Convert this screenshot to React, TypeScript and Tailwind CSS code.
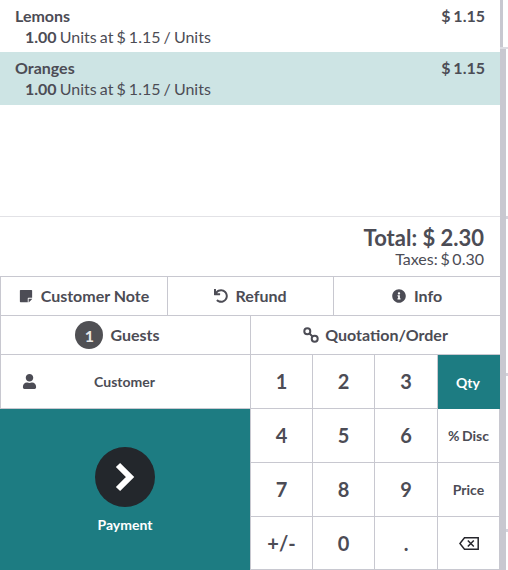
import type { ReactNode } from "react";
import { FaInfoCircle, FaStickyNote, FaUndo, FaUser } from "react-icons/fa";

const Line = ({ name, sel, h }: { name: string; sel?: boolean; h: string }) => (
  <div className={`${h} px-[15px] pt-[5px] shrink-0 ${sel ? "bg-[#cde4e4]" : ""}`}>
    <div className="flex justify-between font-bold text-[16px] leading-[22px] [word-spacing:-1px]">
      <span>{name}</span>
      <span>$ 1.15</span>
    </div>
    <div className="pl-[10px] text-[16px] leading-[20px] [word-spacing:-1px]">
      <b>1.00</b> Units at $ 1.15 / Units
    </div>
  </div>
);

const Key = ({ children, small, active }: { children: ReactNode; small?: boolean; active?: boolean }) => (
  <div
    className={`flex items-center justify-center font-bold ${small ? "text-[14px] [word-spacing:-1px]" : "text-[20px] pb-[1px]"} ${
      active ? "bg-[#1d7c82] text-white pr-[2px]" : "border-r border-b border-[#c8c8d0]"
    }`}
  >
    {children}
  </div>
);

const Backspace = () => (
  <svg width="20" height="13" viewBox="0 0 20 13" fill="none" stroke="#26262c" strokeWidth="1.5">
    <path d="M5.5 0.8H19.2V12.2H5.5L0.9 6.5Z" />
    <path d="M8.8 3.4L14.8 9.6M14.8 3.4L8.8 9.6" />
  </svg>
);

const Chain = () => (
  <svg width="16" height="16" viewBox="0 0 16 16" fill="none" stroke="currentColor" strokeWidth="2">
    <circle cx="4.3" cy="4.3" r="3" />
    <circle cx="11.7" cy="11.7" r="3" />
    <path d="M6.5 6.5L9.5 9.5" />
  </svg>
);

const Chevron = () => (
  <svg width="20" height="30" viewBox="0 0 20 30" fill="none" stroke="#ffffff" strokeWidth="6">
    <path d="M3 3L15 15L3 27" />
  </svg>
);

export default function App() {
  return (
    <div className="w-[508px] h-[570px] overflow-hidden flex bg-white text-[#4c4c55] font-['Lato',sans-serif]">
      <div className="w-[500px] h-full flex flex-col shrink-0">
        <div className="h-[217px] shrink-0 border-b border-[#e2e2e6] flex flex-col">
          <Line name="Lemons" h="h-[52px]" />
          <Line name="Oranges" h="h-[53px]" sel />
        </div>
        <div className="h-[59px] shrink-0 text-right pr-[16px] pt-[7px]">
          <div className="text-[22px] font-bold leading-[27px]">Total: $ 2.30</div>
          <div className="text-[16px] leading-[15px] [word-spacing:-1.4px]">Taxes: $ 0.30</div>
        </div>
        <div className="h-[40px] shrink-0 grid grid-cols-[167px_166px_1fr] border-t border-b border-l border-[#c8c8d0] text-[16px] font-bold">
          <div className="flex items-center justify-center gap-[8px] border-r border-[#c8c8d0]">
            <FaStickyNote size={14} />
            Customer Note
          </div>
          <div className="flex items-center justify-center gap-[7px] border-r border-[#c8c8d0]">
            <FaUndo size={14} />
            Refund
          </div>
          <div className="flex items-center justify-center gap-[8px]">
            <FaInfoCircle size={14} />
            Info
          </div>
        </div>
        <div className="h-[39px] shrink-0 grid grid-cols-[250px_1fr] border-b border-l border-[#c8c8d0] text-[16px] font-bold">
          <div className="flex items-center justify-center gap-[7px] border-r border-[#c8c8d0] pr-[16px]">
            <span className="w-[28px] h-[28px] rounded-full bg-[#505054] text-[#e8e8e8] flex items-center justify-center pt-[2px]">1</span>
            Guests
          </div>
          <div className="flex items-center justify-center gap-[6px]">
            <Chain />
            Quotation/Order
          </div>
        </div>
        <div className="flex-1 grid grid-cols-[251px_1fr] min-h-0">
          <div className="flex flex-col">
            <div className="h-[54px] shrink-0 flex items-center border-l border-r border-b border-[#c8c8d0] pl-[21px] pr-[38px] text-[14px] font-bold">
              <FaUser size={15} />
              <span className="flex-1 text-center">Customer</span>
            </div>
            <div className="flex-1 bg-[#1d7c82] border-r border-[#c8c8d0] flex flex-col items-center pt-[38px] text-white text-[14px] font-bold">
              <div className="w-[60px] h-[60px] rounded-full bg-[#23272c] flex items-center justify-center">
                <Chevron />
              </div>
              <span className="mt-[7px]">Payment</span>
            </div>
          </div>
          <div className="grid grid-cols-[62px_62px_63px_1fr] grid-rows-[54px_54px_54px_1fr]">
            <Key>1</Key>
            <Key>2</Key>
            <Key>3</Key>
            <Key small active>Qty</Key>
            <Key>4</Key>
            <Key>5</Key>
            <Key>6</Key>
            <Key small>% Disc</Key>
            <Key>7</Key>
            <Key>8</Key>
            <Key>9</Key>
            <Key small>Price</Key>
            <Key>+/-</Key>
            <Key>0</Key>
            <Key>.</Key>
            <Key small><Backspace /></Key>
          </div>
        </div>
      </div>
      <div className="w-[8px] shrink-0 flex flex-col">
        <div className="h-[47px] w-[3px] bg-[#c8c8d0] shrink-0" />
        <div className="h-[2px] w-full bg-[#dcdce2] shrink-0" />
        <div className="flex-1 flex">
          <div className="w-[6px] bg-[#c8c8d0]" />
          <div className="w-[2px] flex flex-col">
            <div className="h-[167px] shrink-0" />
            <div className="h-[3px] bg-[#d4d4dc] shrink-0" />
            <div className="h-[154px] shrink-0" />
            <div className="h-[3px] bg-[#d4d4dc] shrink-0" />
            <div className="h-[153px] shrink-0" />
            <div className="h-[3px] bg-[#d4d4dc] shrink-0" />
          </div>
        </div>
      </div>
    </div>
  );
}
